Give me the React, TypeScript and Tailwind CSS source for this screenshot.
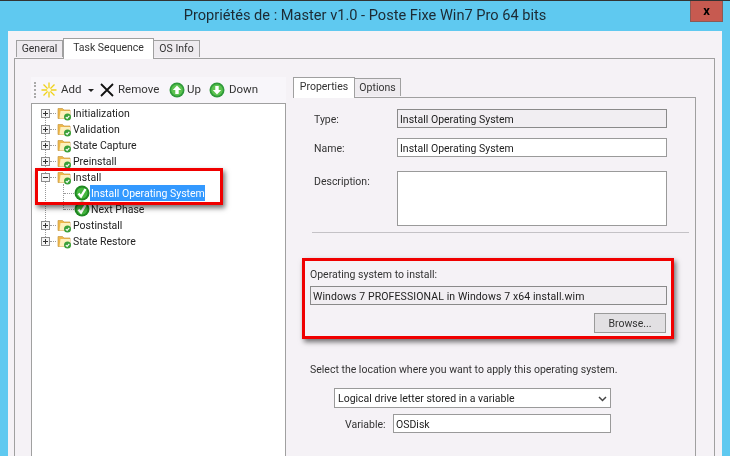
import type { ReactNode } from "react";

function FolderIcon() {
  return (
    <svg width="15" height="15" viewBox="0 0 15 15" className="shrink-0">
      <path d="M1 2.500h4.500l1.500 1.500h6v8.500H1z" fill="#eeb84a" stroke="#c79a45" strokeWidth="0.7" />
      <path d="M3.500 5h9.500v7.500H2.500z" fill="#fdf0bd" />
      <circle cx="10.500" cy="11" r="3.500" fill="#3aa03a" />
      <path d="M8.800 11l1.300 1.400 2.200-2.600" fill="none" stroke="#fff" strokeWidth="1.100" />
    </svg>
  );
}

function CheckIcon() {
  return (
    <svg width="16" height="16" viewBox="0 0 16 16" className="shrink-0">
      <circle cx="8" cy="8" r="7.500" fill="#1f8a22" />
      <circle cx="8" cy="8" r="5.500" fill="#46b83f" />
      <path d="M4.500 8.500l2.500 3 4.500-7.500" fill="none" stroke="#fff" strokeWidth="2.400" />
    </svg>
  );
}

function ArrowIcon({ down }: { down?: boolean }) {
  return (
    <svg width="16" height="16" viewBox="0 0 16 16" className="shrink-0">
      <circle cx="8" cy="8" r="7.500" fill="#2f9a3a" />
      <circle cx="8" cy="8" r="5.800" fill="#5cc34f" />
      <path
        d={down ? "M8 12.500L3.800 8H6.300V4h3.400v4h2.500z" : "M8 3.500L12.200 8H9.700v4H6.300V8H3.800z"}
        fill="#fff"
      />
    </svg>
  );
}

function Expander({ open }: { open?: boolean }) {
  return (
    <span className="relative w-[9px] h-[9px] border border-[#8c8c8c] bg-[#f4f4f4] shrink-0 flex items-center justify-center">
      <span className="w-[5px] h-px bg-[#333]" />
      {!open && <span className="absolute w-px h-[5px] bg-[#333]" />}
    </span>
  );
}

function TreeGroup({ label, open }: { label: string; open?: boolean }) {
  return (
    <div className="h-4 flex items-center pl-[9px]">
      <Expander open={open} />
      <span className="w-[6px] mr-[1px] border-t border-dotted border-[#999]" />
      <FolderIcon />
      <span className="ml-[1px] pt-[2px] text-[#222]">{label}</span>
    </div>
  );
}

function Field({ value, readOnly, className }: { value: string; readOnly?: boolean; className: string }) {
  return (
    <div
      className={`h-[19px] flex items-center pl-[2px] pt-[2px] border text-[#222] ${
        readOnly ? "border-[#8a8a8a] bg-[#f1eef2]" : "border-[#9a9a9a] bg-white"
      } ${className}`}
    >
      {value}
    </div>
  );
}

function FormRow({ label, className, children }: { label: string; className?: string; children: ReactNode }) {
  return (
    <div className={`flex items-start ${className ?? ""}`}>
      <span className="w-[83px] h-[19px] pt-[2px] flex items-center text-[#333]">{label}</span>
      {children}
    </div>
  );
}

function RedBox({ className }: { className: string }) {
  return (
    <div className={`absolute border-[3px] border-[#f00000] shadow-[2px_3px_5px_rgba(0,0,0,0.55)] ${className}`} />
  );
}

export default function App() {
  return (
    <div className="relative w-[730px] h-[456px] overflow-hidden bg-[#5fc9f0] border-t border-[#333] font-['Roboto',sans-serif] text-[10.5px] blur-[0.3px]">
      {/* Title bar */}
      <div className="h-[30px] flex items-center justify-center text-[14.6px] text-[#1c2a33]">
        Propriétés de : Master v1.0 - Poste Fixe Win7 Pro 64 bits
      </div>
      <div className="absolute -top-px right-[7px] w-[33px] h-[22px] bg-[#c75a50] border border-[#8a5a55] flex items-center justify-center text-[13px] font-bold text-black">
        x
      </div>

      {/* Dialog body */}
      <div className="mx-[8px] h-[425px] bg-[#f5f2f6] pt-[7px] pl-[6px] pr-[7px]">
        <div className="flex items-end h-[20px] pl-[2px] relative z-10 text-[#333]">
          <div className="w-[47px] h-[17px] mb-px flex items-center justify-center border border-b-0 border-[#a0a0a0] bg-[#eeebef]">General</div>
          <div className="w-[91px] h-[21px] -mb-px pb-[2px] flex items-center justify-center border border-b-0 border-[#a0a0a0] bg-white">Task Sequence</div>
          <div className="w-[46px] h-[17px] mb-px flex items-center justify-center border border-b-0 border-l-0 border-[#a0a0a0] bg-[#eeebef]">OS Info</div>
        </div>

        <div className="h-[420px] flex border border-[#a0a0a0] pt-[18px] pl-[16px]">
          {/* Left: task sequence tree */}
          <div className="w-[255px] shrink-0 flex flex-col">
            <div className="h-[26px] flex items-center pl-[3px] bg-[#f8f6fa] text-[#333] text-[11.5px]">
              <span className="w-[2px] h-[16px] border-l-2 border-dotted border-[#aaa]" />
              <svg width="16" height="16" viewBox="0 0 16 16" className="ml-[5px] shrink-0">
                <path d="M8 0.500v15M0.500 8h15M2.500 2.500l11 11M13.500 2.500l-11 11" stroke="#efd21a" strokeWidth="1.300" />
                <circle cx="8" cy="8" r="2" fill="#fffbe0" />
              </svg>
              <span className="w-[21px] ml-[4px]">Add</span>
              <span className="ml-[6px] border-x-[3px] border-x-transparent border-t-[3px] border-t-[#222]" />
              <svg width="14" height="14" viewBox="0 0 14 14" className="ml-[6px] shrink-0">
                <path d="M1 1l12 12M13 1L1 13" stroke="#111" strokeWidth="1.800" />
              </svg>
              <span className="w-[43px] ml-[4px] whitespace-nowrap">Remove</span>
              <span className="ml-[8px]"><ArrowIcon /></span>
              <span className="w-[16px] ml-[2px]">Up</span>
              <span className="ml-[6px]"><ArrowIcon down /></span>
              <span className="ml-[4px]">Down</span>
            </div>
            <div className="relative flex-1 border border-[#a0a0a0] bg-white pt-[1px]">
              <span className="absolute left-[13px] top-[5px] h-[132px] border-l border-dotted border-[#999]" />
              <span className="absolute left-[31px] top-[80px] h-[26px] border-l border-dotted border-[#999]" />
              <TreeGroup label="Initialization" />
              <TreeGroup label="Validation" />
              <TreeGroup label="State Capture" />
              <TreeGroup label="Preinstall" />
              <TreeGroup label="Install" open />
              <div className="h-4 flex items-center pl-[32px]">
                <span className="w-[10px] border-t border-dotted border-[#999]" />
                <CheckIcon />
                <span className="h-4 w-[115px] flex items-center pl-[1px] pt-[2px] bg-[#3399ff] text-white whitespace-nowrap">Install Operating System</span>
              </div>
              <div className="h-4 flex items-center pl-[32px]">
                <span className="w-[10px] border-t border-dotted border-[#999]" />
                <CheckIcon />
                <span className="pl-[1px] pt-[2px] text-[#222]">Next Phase</span>
              </div>
              <TreeGroup label="Postinstall" />
              <TreeGroup label="State Restore" />
            </div>
          </div>

          {/* Right: properties */}
          <div className="ml-[7px] w-[403px] shrink-0 flex flex-col">
            <div className="flex items-end h-[20px] relative z-10 text-[#333]">
              <div className="w-[62px] h-[21px] -mb-px pb-[2px] flex items-center justify-center border border-b-0 border-[#a0a0a0] bg-white">Properties</div>
              <div className="w-[46px] h-[18px] mb-px pt-px flex items-center justify-center border border-b-0 border-l-0 border-[#a0a0a0] bg-[#eeebef]">Options</div>
            </div>
            <div className="flex-1 ml-[4px] border-t border-r border-[#a0a0a0] pt-[11px] text-[#333]">
              <div className="pl-[17px]">
                <FormRow label="Type:">
                  <Field value="Install Operating System" readOnly className="w-[270px]" />
                </FormRow>
                <FormRow label="Name:" className="mt-[10px]">
                  <Field value="Install Operating System" className="w-[270px]" />
                </FormRow>
                <FormRow label="Description:" className="mt-[14px]">
                  <div className="w-[270px] h-[55px] border border-[#9a9a9a] bg-white" />
                </FormRow>
              </div>
              <div className="ml-[15px] w-[377px] mt-[6px] border-t border-[#c4c2c6]" />
              <div className="mt-[35px] pl-[13px]">
                <div className="h-[14px] flex items-center">Operating system to install:</div>
                <Field
                  value="Windows 7 PROFESSIONAL in Windows 7 x64 install.wim"
                  readOnly
                  className="w-[357px] mt-[4px] tracking-[0.1px]"
                />
                <div className="w-[357px] flex justify-end mt-[8px]">
                  <div className="w-[72px] h-[20px] mr-px pt-[2px] flex items-center justify-center border border-[#9a9a9a] bg-[#e2e0e3]">Browse...</div>
                </div>
                <div className="mt-[29px] h-[14px] pt-[2px] flex items-center">Select the location where you want to apply this operating system.</div>
                <div className="ml-[24px] mt-[12px] w-[277px] h-[20px] pt-[2px] flex items-center justify-between pl-[3px] pr-[3px] border border-[#9a9a9a] bg-white text-[#222]">
                  Logical drive letter stored in a variable
                  <svg width="9" height="6" viewBox="0 0 9 6"><path d="M1 1l3.500 3.500L8 1" fill="none" stroke="#444" strokeWidth="1.500" /></svg>
                </div>
                <div className="flex items-center mt-[6px]">
                  <span className="ml-[35px] w-[48px] pt-[2px] text-[#333]">Variable:</span>
                  <Field value="OSDisk" className="w-[218px]" />
                </div>
              </div>
            </div>
          </div>
        </div>
      </div>

      {/* Annotations */}
      <RedBox className="left-[35px] top-[167px] w-[188px] h-[37px]" />
      <RedBox className="left-[302px] top-[257px] w-[372px] h-[81px]" />
    </div>
  );
}
